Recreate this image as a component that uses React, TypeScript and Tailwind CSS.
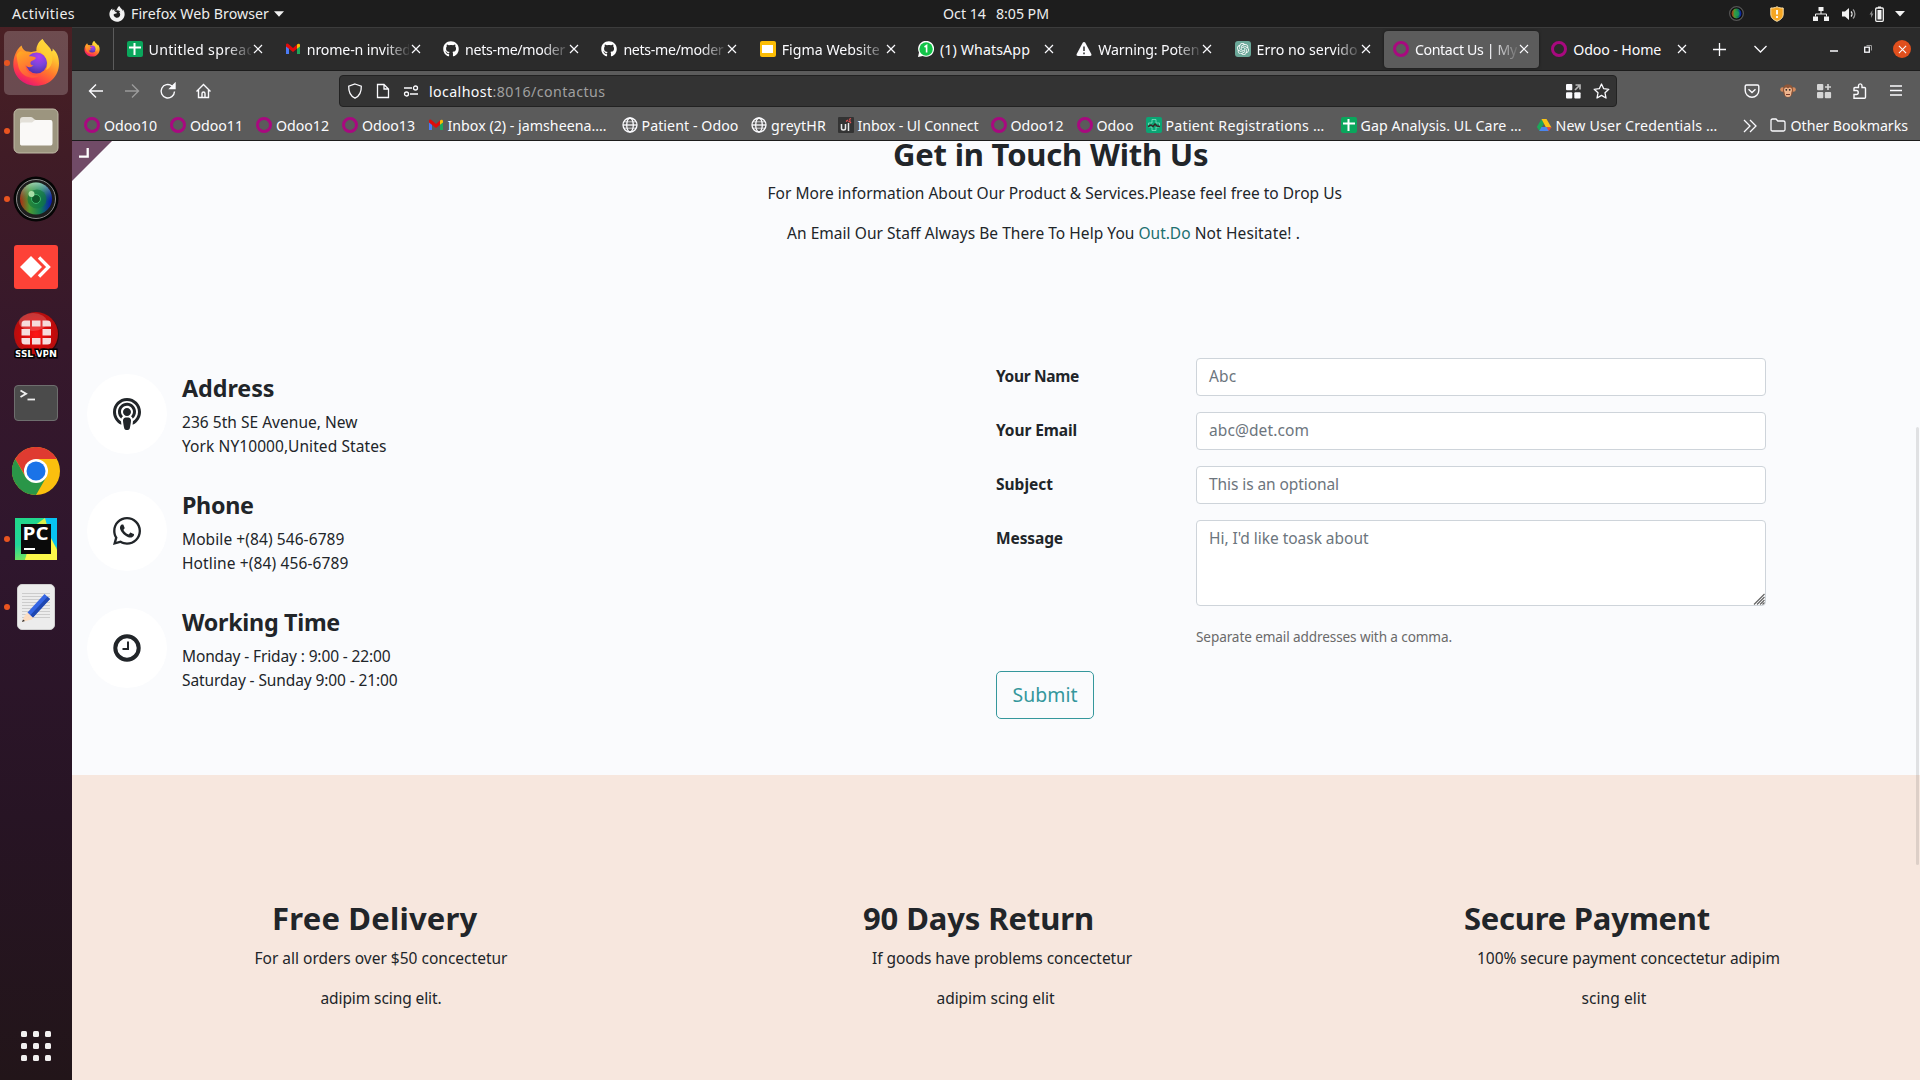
import React, { useLayoutEffect, useRef, useState } from "react";
import { FaGithub, FaWhatsapp, FaPodcast, FaFirefoxBrowser } from "react-icons/fa";
import { SiOpenai } from "react-icons/si";

/* Single line of text whose tracking is computed so that it fills the given width. */
function Fit({ w, children, className = "" }: { w: number; children: string; className?: string }) {
  const ref = useRef<HTMLSpanElement>(null);
  const [spacing, setSpacing] = useState(0);
  useLayoutEffect(() => {
    const el = ref.current;
    if (!el) return;
    el.style.letterSpacing = "0px";
    setSpacing((w - el.getBoundingClientRect().width) / children.length);
  }, [w, children]);
  return (
    <span ref={ref} className={"inline-block whitespace-pre " + className} style={{ letterSpacing: `${spacing}px` }}>
      {children}
    </span>
  );
}

function FirefoxLogo({ size, id }: { size: number; id: string }) {
  return (
    <svg width={size} height={size} viewBox="0 0 48 48">
      <defs>
        <linearGradient id={id + "a"} x1="0.8" y1="0" x2="0.25" y2="1">
          <stop offset="0" stopColor="#fff44f" />
          <stop offset="0.3" stopColor="#ffc02f" />
          <stop offset="0.55" stopColor="#ff7b2c" />
          <stop offset="0.8" stopColor="#ff3a49" />
          <stop offset="1" stopColor="#e0127c" />
        </linearGradient>
        <radialGradient id={id + "b"} cx="0.6" cy="0.2" r="0.85">
          <stop offset="0" stopColor="#b13bf0" />
          <stop offset="0.5" stopColor="#7a45d8" />
          <stop offset="1" stopColor="#4b2fa5" />
        </radialGradient>
        <linearGradient id={id + "c"} x1="0" y1="0" x2="0.4" y2="1">
          <stop offset="0" stopColor="#ffae22" />
          <stop offset="1" stopColor="#ff5a3a" />
        </linearGradient>
      </defs>
      <path
        fill={`url(#${id}a)`}
        d="M9.5 6.5C4 11 1.3 18 1.3 25.5 1.3 37.5 11.5 46.8 24.3 46.8S47 37.5 47 24.5C47 17 44.2 12.5 40.5 9.5 41 11.5 40.5 12.5 39.5 12.5 38.5 8 33 5 30.5 0 26 3 24 8 24.5 12L17 13.5C13 12.5 10.3 10 9.500 6.500Z"
      />
      <circle cx="24.500" cy="24" r="10.500" fill={`url(#${id}b)`} />
      <path
        fill={`url(#${id}c)`}
        d="M4.500 16C7 11.500 9 11.500 12 13.500 15 12 17 12.500 19 13 17.500 15 17 16 17.500 17.500 20 17 23 18 24 19 22.500 21.500 19 21.500 18.500 23.500 18 25.500 20 26.500 21.500 26 18.500 29.500 15 28.500 13.500 25.500 13 32 19.500 37.500 27 36.500 22 41.500 9 38 6.500 28 5.500 24 5 20 4.500 16Z"
      />
      <path fill="#ffd035" opacity="0.75" d="M30.500 0C26 4 25.500 9 29 13 34 18 37.500 23 34 31 39.500 29 42 21 39.500 12.500 38.500 8 33 5 30.500 0Z" />
    </svg>
  );
}

const Sheet = () => (
  <div className="flex h-4 w-4 items-center justify-center rounded-[2px] bg-[#0aa75c]">
    <svg width="12" height="12" viewBox="0 0 12 12" stroke="#fff" strokeWidth="2">
      <path d="M0 4.500H12M5.500 0V12" />
    </svg>
  </div>
);
const Gmail = () => (
  <svg width="16" height="16" viewBox="0 0 16 16">
    <path fill="#4b7bf5" d="M1 4v9h3V6z" />
    <path fill="#1ea75a" d="M12 6v7h3V4z" />
    <path fill="#fbbc04" d="M12 3.500v4.200l3-2.200V4c0-1.300-1.600-2-3-.5z" />
    <path fill="#e00b0b" d="M1 4c0-1.500 1.600-2 3-.5L8 7l4-3.500v4.200L8 11 1 5.500z" />
  </svg>
);
const Slides = () => (
  <div className="flex h-4 w-4 items-center justify-center rounded-[2px] bg-[#fbbc04]">
    <div className="h-[8px] w-[11px] bg-white" />
  </div>
);
const Wa = () => (
  <svg width="16" height="16" viewBox="0 0 16 16">
    <path fill="#fff" d="M0 16 1 11.500A8 8 0 1 1 4.600 15z" />
    <circle cx="8.100" cy="8" r="6.700" fill="#12c448" />
    <path d="M6.500 6 8.600 4.600V11.500" stroke="#fff" strokeWidth="1.600" fill="none" />
  </svg>
);
const Warn = () => (
  <svg width="16" height="16" viewBox="0 0 16 16">
    <path fill="#fbfbfe" d="M8 1c.6 0 1 .3 1.300.8l6 11.200c.5 1-.1 2-1.300 2H2c-1.200 0-1.800-1-1.300-2l6-11.200C7 1.300 7.400 1 8 1z" />
    <path d="M8 5.500v4.500M8 11.500v1.700" stroke="#2b2b2b" strokeWidth="1.500" />
  </svg>
);
const Gpt = () => (
  <div className="flex h-4 w-4 items-center justify-center rounded-[3px] bg-[#6ba899] text-[12px] text-white">
    <SiOpenai />
  </div>
);
const Ring = () => <div className="h-4 w-4 rounded-full border-[3.5px] border-[#a8097f]" />;
const Globe = () => (
  <svg width="16" height="16" viewBox="0 0 16 16" fill="none" stroke="#fbfbfe" strokeWidth="1.300">
    <circle cx="8" cy="8" r="7" />
    <ellipse cx="8" cy="8" rx="3.300" ry="7" />
    <path d="M1 8H15" />
    <path d="M2 4.800H14M2 11.200H14" strokeWidth="0.700" />
  </svg>
);
const Ul = () => (
  <div className="relative h-4 w-4 rounded-[1px] bg-[#333]">
    <svg width="16" height="16" viewBox="0 0 16 16" fill="none">
      <path d="M3.500 7v4.500c0 2 4 2 4 0V7M10.500 6v8" stroke="#e8e8e8" strokeWidth="1.500" />
      <path d="M8 4.500 10 3M11 2.500l2-1M10.500 5 12.500 3.500M12 6l1-1" stroke="#e05252" strokeWidth="1.300" />
    </svg>
  </div>
);
const Patient = () => (
  <svg width="16" height="16" viewBox="0 0 16 16">
    <rect width="16" height="16" rx="2" fill="#0aa574" />
    <path d="M6 2.500h4V6h3.500v4H10v3.500H6V10H2.500V6H6z" fill="none" stroke="#7fe0bf" strokeWidth="0.800" />
    <path d="M2 9.500 5 8l2 1.500L9 7l2 2 3 .5" fill="none" stroke="#3a2222" strokeWidth="1.400" />
  </svg>
);
const Drive = () => (
  <svg width="16" height="16" viewBox="0 0 16 16">
    <path fill="#1ea75a" d="M5.500 2 8 6.500 3.500 14 .8 10z" />
    <path fill="#fbc316" d="M5.500 2h5L15.500 10.500H10z" />
    <path fill="#4a86f0" d="M3.200 14 5.500 10h7L12.800 14z" />
    <path fill="#e8453c" d="M12.800 14 10.500 10.300h5z" />
  </svg>
);
const Folder = () => (
  <svg width="16" height="16" viewBox="0 0 16 16" fill="none" stroke="#fbfbfe" strokeWidth="1.300">
    <path d="M1 3.500C1 2.500 1.500 2 2.500 2H6l1.800 2h5.700c1 0 1.500.5 1.500 1.500v7c0 1-.5 1.500-1.500 1.500h-11C1.500 14 1 13.500 1 12.500z" />
  </svg>
);

const tabs: { icon: React.ReactNode; title: string; w: number; active?: boolean }[] = [
  { icon: <Sheet />, title: "Untitled spread", w: 107 },
  { icon: <Gmail />, title: "nrome-n invited", w: 104 },
  { icon: <FaGithub size={16} color="#fff" />, title: "nets-me/moder", w: 100 },
  { icon: <FaGithub size={16} color="#fff" />, title: "nets-me/moder", w: 100 },
  { icon: <Slides />, title: "Figma Website", w: 98 },
  { icon: <Wa />, title: "(1) WhatsApp", w: 90 },
  { icon: <Warn />, title: "Warning: Poten", w: 101 },
  { icon: <Gpt />, title: "Erro no servido", w: 101 },
  { icon: <Ring />, title: "Contact Us | My", w: 102, active: true },
  { icon: <Ring />, title: "Odoo - Home", w: 88 },
];

const bookmarks: { icon: React.ReactNode; title: string; w: number; item: string }[] = [
  { icon: <Ring />, title: "Odoo10", w: 53, item: "w-[86px]" },
  { icon: <Ring />, title: "Odoo11", w: 53, item: "w-[86px]" },
  { icon: <Ring />, title: "Odoo12", w: 53, item: "w-[86px]" },
  { icon: <Ring />, title: "Odoo13", w: 53, item: "w-[85.500px]" },
  { icon: <Gmail />, title: "Inbox (2) - jamsheena.…", w: 159, item: "w-[194px]" },
  { icon: <Globe />, title: "Patient - Odoo", w: 97, item: "w-[129.500px]" },
  { icon: <Globe />, title: "greytHR", w: 55, item: "w-[86.500px]" },
  { icon: <Ul />, title: "Inbox - Ul Connect", w: 121, item: "w-[153px]" },
  { icon: <Ring />, title: "Odoo12", w: 53, item: "w-[86px]" },
  { icon: <Ring />, title: "Odoo", w: 37, item: "w-[69px]" },
  { icon: <Patient />, title: "Patient Registrations …", w: 159, item: "w-[195px]" },
  { icon: <Sheet />, title: "Gap Analysis. UL Care …", w: 161, item: "w-[195px]" },
  { icon: <Drive />, title: "New User Credentials …", w: 162, item: "w-[198px]" },
];

function TopBar() {
  return (
    <div className="flex h-[27px] shrink-0 items-center bg-[#1d1d1d] text-[14.200px] leading-[26px] text-[#eeeeee]">
      <div className="w-[109px] pl-3">
        <Fit w={63}>Activities</Fit>
      </div>
      <FaFirefoxBrowser size={16} color="#f2f2f2" />
      <div className="ml-[6px] w-[139px]">
        <Fit w={138}>Firefox Web Browser</Fit>
      </div>
      <svg className="ml-1" width="10" height="6" viewBox="0 0 11 6">
        <path fill="#f2f2f2" d="M0 0H11L5.500 6z" />
      </svg>
      <div className="ml-[659px] flex gap-[10px]">
        <Fit w={43}>Oct 14</Fit>
        <Fit w={53}>8:05 PM</Fit>
      </div>
      <div className="ml-auto flex items-center pr-[15px]">
        <svg className="mr-[26px]" width="15" height="15" viewBox="0 0 46 46">
          <circle cx="23" cy="23" r="21" fill="#0c0c0c" stroke="#555" strokeWidth="4" />
          <circle cx="23" cy="23" r="15" fill="url(#lens)" />
          <circle cx="24" cy="23" r="8" fill="#1fa055" opacity="0.700" />
        </svg>
        <svg className="mr-[29px]" width="14" height="16" viewBox="0 0 14 16">
          <path d="M7 .7C5 2 3 2 .8 2v6c0 4 3 6 6.200 7.300C10.200 14 13.200 12 13.200 8V2C11 2 9 2 7 .7z" fill="#f5a623" stroke="#fde3ad" strokeWidth="1" />
          <path d="M7 4v4.500M7 10v2" stroke="#fff" strokeWidth="1.800" />
        </svg>
        <svg className="mr-[13px]" width="16" height="14" viewBox="0 0 16 14" fill="#f2f2f2">
          <path d="M5.500 0h5v4h-5zM0 9.500h5V14H0zM11 9.500h5V14h-5z" />
          <path d="M8 4v3M2.500 9.500V7h11v2.500" fill="none" stroke="#f2f2f2" />
        </svg>
        <svg className="mr-[12px]" width="15" height="14" viewBox="0 0 15 14">
          <path d="M0 4.500h3L7 1v12L3 9.500H0z" fill="#f2f2f2" />
          <path d="M9 4.500c1.300 1.300 1.300 3.700 0 5" fill="none" stroke="#f2f2f2" strokeWidth="1.300" />
          <path d="M11 2.500c2.500 2.500 2.500 6.500 0 9" fill="none" stroke="#999" strokeWidth="1.300" />
        </svg>
        <svg className="mr-[11px]" width="15" height="16" viewBox="0 0 15 16">
          <path d="M3.500 4 .5 8.500H2V12L4.500 7.500H3z" fill="#888" />
          <rect x="6.700" y="2" width="7.600" height="13.300" rx="1" fill="none" stroke="#f2f2f2" strokeWidth="1.300" />
          <path d="M9 .5h3V2H9zM8.500 4h4v9.500h-4z" fill="#f2f2f2" />
        </svg>
        <svg width="10" height="6" viewBox="0 0 10 6">
          <path fill="#f2f2f2" d="M0 0H10L5 5.500z" />
        </svg>
      </div>
    </div>
  );
}

function DockItem({ children, running, active }: { children: React.ReactNode; running?: boolean; active?: boolean }) {
  return (
    <div className="relative flex h-[68px] w-full shrink-0 items-center justify-center">
      {active && <div className="absolute inset-x-1 inset-y-[2px] rounded-[5px] bg-white/20" />}
      {running && <div className="absolute left-[4px] top-[31px] h-[6px] w-[6px] rounded-full bg-[#e95420]" />}
      <div className="relative">{children}</div>
    </div>
  );
}

function Dock() {
  const cells = [0, 1, 2];
  return (
    <div className="flex w-[72px] shrink-0 flex-col bg-[linear-gradient(180deg,#4a2024_0%,#401c26_12%,#36182b_30%,#2f162d_50%,#271424_75%,#221519_100%)] pt-[2px]">
      <DockItem running active>
        <FirefoxLogo size={48} id="ffl" />
      </DockItem>
      <DockItem running>
        <svg width="46" height="46" viewBox="0 0 46 46">
          <rect x="1" y="1" width="44" height="44" rx="5" fill="#9c957f" stroke="#c0baa7" />
          <path d="M7 12c0-2 1-3 3-3h8c2 0 3 3 5 3h14c2 0 2 1 2 3v20c0 1.500-.5 2-2 2H9c-1.500 0-2-.5-2-2z" fill="#e3e0d8" />
          <path d="M7 17c0-2 1-2.500 3-2.500h9l3-2.500h15c2 0 2.500 1 2.500 3v20c0 2-.8 2.500-2.500 2.500H9.500C7.700 37.500 7 37 7 35z" fill="#faf9f7" />
        </svg>
      </DockItem>
      <DockItem running>
        <svg width="46" height="46" viewBox="0 0 46 46">
          <defs>
            <linearGradient id="lens" x1="0" x2="1">
              <stop offset="0" stopColor="#b12a12" />
              <stop offset="0.300" stopColor="#4c9a32" />
              <stop offset="0.650" stopColor="#0f7a5a" />
              <stop offset="1" stopColor="#0b12b5" />
            </linearGradient>
            <linearGradient id="lens2" x1="0" x2="0" y1="0" y2="1">
              <stop offset="0" stopColor="#c8ece0" stopOpacity="0.700" />
              <stop offset="0.600" stopColor="#1d8a50" stopOpacity="0" />
            </linearGradient>
          </defs>
          <circle cx="23" cy="23" r="22.500" fill="#050505" />
          <circle cx="23" cy="23" r="19.500" fill="#1d1d1d" stroke="#8d8d8d" strokeWidth="1" />
          <circle cx="23" cy="22.500" r="16" fill="url(#lens)" />
          <circle cx="23" cy="22.500" r="16" fill="url(#lens2)" />
          <circle cx="24" cy="23" r="9.500" fill="#127a3e" opacity="0.650" />
          <circle cx="23" cy="23" r="4.500" fill="#0e5a2a" stroke="#3db86c" />
          <circle cx="18.500" cy="18" r="3" fill="#c9f5c0" opacity="0.800" />
        </svg>
      </DockItem>
      <DockItem>
        <div className="flex h-11 w-11 items-center justify-center rounded-[3px] bg-[#fd4237]">
          <svg width="32" height="22" viewBox="0 0 32 22">
            <path d="M11 0 22 11 11 22 0 11z" fill="#fff" />
            <path d="M19 1.500 28.500 11 19 20.500" fill="none" stroke="#fff" strokeWidth="3.300" />
          </svg>
        </div>
      </DockItem>
      <DockItem>
        <svg width="46" height="48" viewBox="0 0 46 48">
          <defs>
            <radialGradient id="vpn" cx="0.500" cy="0.500" r="0.550">
              <stop offset="0" stopColor="#ff1616" />
              <stop offset="0.600" stopColor="#d00808" />
              <stop offset="1" stopColor="#a11" />
            </radialGradient>
          </defs>
          <circle cx="24" cy="24" r="22" fill="#2a0c12" />
          <circle cx="23" cy="23" r="22" fill="url(#vpn)" />
          <ellipse cx="20" cy="11" rx="14" ry="9" fill="#fff" opacity="0.180" />
          <path
            fill="#f6dcdc"
            d="M12 9.500h5v6H8.500v-2C8.500 11 9.500 9.500 12 9.500zM19 9.500h8.500v6H19zM29.500 9.500h5c2.500 0 3.500 1.500 3.500 4v2h-8.500zM8.500 18h8.500v6.500H8.500zM29.500 18H38v6.500h-8.500zM8.500 27h8.500v6.500h-5c-2.500 0-3.500-1-3.500-3.500zM19 27h8.500v6.500H19zM29.500 27H38v3c0 2.500-1 3.500-3.500 3.500h-5z"
          />
          <text
            x="23"
            y="46"
            textAnchor="middle"
            textLength="42"
            className="font-['DejaVu_Sans'] text-[9.500px] font-bold"
            fill="#fff"
            stroke="#000"
            strokeWidth="3"
            paintOrder="stroke"
          >
            SSL VPN
          </text>
        </svg>
      </DockItem>
      <DockItem>
        <svg width="44" height="36" viewBox="0 0 44 36">
          <rect x="0.500" y="0.500" width="43" height="35" rx="3.500" fill="#4b4b4b" stroke="#6e6e6e" />
          <path d="M6.500 5.500 12 8.700 6.500 12" fill="none" stroke="#eee" strokeWidth="1.900" />
          <path d="M13.500 14.500H21" stroke="#eee" strokeWidth="1.800" />
        </svg>
      </DockItem>
      <DockItem>
        <svg width="48" height="48" viewBox="0 0 48 48">
          <circle cx="24" cy="24" r="24" fill="#fbbf0e" />
          <path d="M24 12H44.800A24 24 0 0 0 3.200 12L14 30z" fill="#df3b31" />
          <path d="M3.200 12 13.600 30 24 36 34.400 30 24 48A24 24 0 0 1 3.200 12z" fill="#2a9648" />
          <circle cx="24" cy="24" r="12" fill="#fff" />
          <circle cx="24" cy="24" r="9.500" fill="#1a73e8" />
        </svg>
      </DockItem>
      <DockItem running>
        <svg width="42" height="42" viewBox="0 0 42 42">
          <defs>
            <linearGradient id="pyc" x1="0" x2="0.300" y1="0" y2="1">
              <stop offset="0" stopColor="#21d789" />
              <stop offset="0.600" stopColor="#22d59a" />
              <stop offset="1" stopColor="#7be85a" />
            </linearGradient>
          </defs>
          <rect width="42" height="42" fill="url(#pyc)" />
          <path d="M29 0H42V30L36 22z" fill="#07c3f2" />
          <path d="M19 8 30 0 36 22 42 33V42H10L12 34z" fill="#d9f04a" />
          <path d="M12 36 36 20 42 32V42H10z" fill="#fcf84a" />
          <rect x="6" y="6" width="30" height="30" fill="#0a0a0a" />
          <text x="7.500" y="22" textLength="26" lengthAdjust="spacingAndGlyphs" className="font-['Open_Sans'] text-[18px] font-bold" fill="#fff">
            PC
          </text>
          <rect x="9" y="30" width="11" height="2" fill="#fff" />
        </svg>
      </DockItem>
      <DockItem running>
        <svg width="38" height="46" viewBox="0 0 38 46">
          <rect x="0.500" y="0.500" width="37" height="45" rx="4.500" fill="#ececec" stroke="#cfcfcf" />
          <path d="M5 9.500H33M5 12.500H33M5 15.500H33M5 18.500H33M5 21.500H33M5 24.500H33M5 27.500H33M5 30.500H33M5 33.500H33" stroke="#c4c4c4" strokeWidth="0.800" />
          <path d="M5 38 8 31 14.500 35.500z" fill="#fbdcc0" />
          <path d="M5 38 6 35.500 8 37z" fill="#333" />
          <path d="M8 31 11 28 17 33.500 14 36z" fill="#fbdcc0" />
          <path d="M10.500 28.500 27.500 10 33 15 16 33.500z" fill="#3465e3" />
          <path d="M13.500 31 30.500 12.700 33 15 16 33.500z" fill="#1f47b0" />
        </svg>
      </DockItem>
      <div className="mb-[19px] ml-[21px] mt-auto flex flex-col gap-[6px]">
        {cells.map((r) => (
          <div key={r} className="flex gap-[6px]">
            {cells.map((c) => (
              <div key={c} className="h-[6px] w-[6px] rounded-[1.500px] bg-[#f2f0f0]" />
            ))}
          </div>
        ))}
      </div>
    </div>
  );
}

const Cross = ({ size = 10 }: { size?: number }) => (
  <svg width={size} height={size} viewBox="0 0 10 10" stroke="#fbfbfe" strokeWidth="1.200">
    <path d="M1 1 9 9M9 1 1 9" />
  </svg>
);

function TabBar() {
  return (
    <div className="flex h-[43px] items-center border-t border-[#3c3c3c] bg-[#2b2b2b]">
      <div className="flex h-full w-[42px] items-center border-r border-[#5c5c5c] pl-3">
        <FirefoxLogo size={16} id="ffs" />
      </div>
      <div className="ml-[2px] flex h-[37px]">
        {tabs.map((t, i) => (
          <div key={i} className="h-full w-[158.300px] px-[2px]">
            <div className={"flex h-full items-center rounded-[4px] pl-[8.500px] text-[14.200px] text-[#fbfbfe] " + (t.active ? "bg-[#5c5c5c] shadow-[0_0_3px_rgba(0,0,0,0.500)]" : "")}>
              <div className="w-[22px] shrink-0">{t.icon}</div>
              <div className={"w-[102px] shrink-0 overflow-hidden pt-px " + (t.w > 93 ? "[mask-image:linear-gradient(90deg,#000_76%,transparent_103%)]" : "")}>
                <Fit w={t.w}>{t.title}</Fit>
              </div>
              <div className="ml-[2px]">
                <Cross />
              </div>
            </div>
          </div>
        ))}
      </div>
      <div className="ml-auto flex items-center pr-[9px]">
        <svg className="mr-[28px]" width="13" height="13" viewBox="0 0 13 13" stroke="#fbfbfe" strokeWidth="1.300">
          <path d="M0 6.500H13M6.500 0V13" />
        </svg>
        <svg className="mr-[63px]" width="13" height="8" viewBox="0 0 13 8" stroke="#fbfbfe" strokeWidth="1.300" fill="none">
          <path d="M.5 1 6.500 7 12.500 1" />
        </svg>
        <svg className="mr-[26px] mt-1" width="8" height="2" viewBox="0 0 8 2">
          <path d="M0 1H8" stroke="#fbfbfe" strokeWidth="1.500" />
        </svg>
        <svg className="mr-[21px]" width="8" height="8" viewBox="0 0 8 8" fill="none">
          <path d="M2.500.5H7.500V5.500" stroke="#9a9a9a" />
          <rect x="0.700" y="2.200" width="4.600" height="5" stroke="#fbfbfe" strokeWidth="1.300" />
        </svg>
        <div className="flex h-[18px] w-[18px] items-center justify-center rounded-full bg-[#e04f1d]">
          <Cross size={9} />
        </div>
      </div>
    </div>
  );
}

function NavBar() {
  return (
    <div className="flex h-[41px] items-center border-t border-[#1c1c1c] bg-[#5b5b5b] pl-4 text-[#fbfbfe]">
      <svg width="123" height="18" viewBox="0 0 123 18" fill="none" stroke="#fbfbfe" strokeWidth="1.400">
        <path d="M15 9H1.500M8 2.500 1.500 9 8 15.500" />
        <path d="M37 9H50.500M44 2.500 50.500 9 44 15.500" stroke="#9b9b9b" />
        <path d="M86.500 9.500A6.700 6.700 0 1 1 84 4" />
        <path d="M82 6.500H87V1.500z" fill="#fbfbfe" />
        <path d="M108.500 9.500 115.500 2.500 122.500 9.500M110.500 8V15.500H120.500V8M114 15.500V11.500C114 9.500 117 9.500 117 11.500V15.500" />
      </svg>
      <div className="ml-[128px] flex h-8 w-[1278px] items-center rounded-[4px] border border-[#222] bg-[#333] pl-[7px] text-[14.200px]">
        <svg width="16" height="16" viewBox="0 0 16 16" fill="none" stroke="#fbfbfe" strokeWidth="1.300">
          <path d="M8 1 14.300 3.200C14.500 9 12.500 13 8 15.200 3.500 13 1.500 9 1.700 3.200z" />
        </svg>
        <svg className="ml-[13px]" width="14" height="16" viewBox="0 0 14 16" fill="none" stroke="#fbfbfe" strokeWidth="1.300">
          <path d="M1.500 1.500H8L12.500 6V14.500H1.500zM8 1.500V6H12.500" />
        </svg>
        <svg className="ml-[13px]" width="16" height="12" viewBox="0 0 16 12" fill="none" stroke="#fbfbfe" strokeWidth="1.300">
          <path d="M1 3H9M7 9H15" />
          <circle cx="12.500" cy="3" r="2" />
          <circle cx="3.500" cy="9" r="2" />
        </svg>
        <div className="ml-[10px] whitespace-nowrap pt-px">
          <Fit w={63.500}>localhost</Fit>
          <Fit w={113} className="text-[#a0a0a0]">:8016/contactus</Fit>
        </div>
        <svg className="ml-auto" width="15" height="15" viewBox="0 0 15 15" fill="#fbfbfe">
          <rect width="6.300" height="6.300" rx="1" />
          <rect y="8.300" width="6.300" height="6.300" rx="1" />
          <rect x="8.300" y="8.300" width="6.300" height="6.300" rx="1" />
          <path d="M9 6 13.500 1.500M9.500 1H14V5.500" fill="none" stroke="#b5b5b5" strokeWidth="1.700" />
        </svg>
        <svg className="ml-[12px] mr-[6.500px]" width="17" height="16" viewBox="0 0 17 16" fill="none" stroke="#fbfbfe" strokeWidth="1.300" strokeLinejoin="round">
          <path d="M8.500 1 10.700 5.700 15.800 6.300 12 9.800 13 15 8.500 12.400 4 15 5 9.800 1.200 6.300 6.300 5.700z" />
        </svg>
      </div>
      <div className="ml-auto mr-4 flex items-center gap-5">
        <svg width="16" height="16" viewBox="0 0 16 16" fill="none" stroke="#fbfbfe" strokeWidth="1.400">
          <path d="M2.500 2H13.500C14.300 2 14.800 2.500 14.800 3.300V7.500A6.800 6.800 0 0 1 1.200 7.500V3.300C1.200 2.500 1.700 2 2.500 2z" />
          <path d="M4.500 6.200 8 9.500 11.500 6.200" />
        </svg>
        <svg width="16" height="16" viewBox="0 0 16 16">
          <circle cx="2.500" cy="6.500" r="2.300" fill="#d58a5c" />
          <circle cx="13.500" cy="6.500" r="2.300" fill="#d58a5c" />
          <path d="M8 1.500c4 0 5 2.500 5 6s-2 7-5 7-5-3.500-5-7 1-6 5-6z" fill="#8f5638" />
          <path d="M8 5.500C6 3.500 4 5 4 7c0 1.500.8 2 .8 3.500C4.800 13 6 14 8 14s3.200-1 3.200-3.500C11.200 9 12 8.500 12 7c0-2-2-3.500-4-1.500z" fill="#efb58e" />
          <circle cx="6.300" cy="6.800" r="0.900" fill="#222" />
          <circle cx="9.700" cy="6.800" r="0.900" fill="#222" />
          <path d="M6 11.500h4" stroke="#7a3b2a" />
        </svg>
        <svg width="16" height="16" viewBox="0 0 16 16" fill="#d6d6d6">
          <rect x="1" y="1" width="6.300" height="6.300" rx="1" />
          <rect x="1" y="9" width="6.300" height="6.300" rx="1" />
          <rect x="8.800" y="9" width="6.300" height="6.300" rx="1" />
          <path d="M12 1v6M9 4h6" stroke="#d6d6d6" strokeWidth="1.600" />
        </svg>
        <svg width="16" height="16" viewBox="0 0 16 16" fill="none" stroke="#fbfbfe" strokeWidth="1.400">
          <path d="M2 15.200V11.500H4.500C6.800 11.500 6.800 7.500 4.500 7.500H2V5.500C2 4.800 2.300 4.500 3 4.500H6.500V2.700C6.500.3 10 .3 10 2.700V4.500H12.500C13.200 4.500 13.500 4.800 13.500 5.500V14.200C13.500 15 13.200 15.200 12.500 15.200z" />
        </svg>
        <svg width="16" height="16" viewBox="0 0 16 16" stroke="#fbfbfe" strokeWidth="1.300">
          <path d="M2 3H14M2 7.500H14M2 12H14" />
        </svg>
      </div>
    </div>
  );
}

function BookmarkBar() {
  return (
    <div className="flex h-[30px] items-center border-b border-[#1c1c1c] bg-[#5b5b5b] pl-3 text-[14.200px] text-[#fbfbfe]">
      {bookmarks.map((b, i) => (
        <div key={i} className={"flex shrink-0 items-center gap-[4px] whitespace-nowrap " + b.item}>
          {b.icon}
          <Fit w={b.w}>{b.title}</Fit>
        </div>
      ))}
      <svg className="ml-[9px]" width="14" height="14" viewBox="0 0 14 14" fill="none" stroke="#fbfbfe" strokeWidth="1.300">
        <path d="M1 1 7 7 1 13M7 1 13 7 7 13" />
      </svg>
      <div className="ml-auto flex shrink-0 items-center gap-[4.500px] pr-3">
        <Folder />
        <Fit w={117.500}>Other Bookmarks</Fit>
      </div>
    </div>
  );
}

const contacts = [
  { icon: <FaPodcast size={32} />, title: "Address", tw: 92.500, lines: [["236 5th SE Avenue, New", 175.500], ["York NY10000,United States", 204.500]] },
  { icon: <FaWhatsapp size={32} />, title: "Phone", tw: 71.500, lines: [["Mobile +(84) 546-6789", 162.500], ["Hotline +(84) 456-6789", 166.500]] },
  {
    icon: (
      <svg width="28" height="28" viewBox="0 0 28 28" fill="none" stroke="#212529">
        <circle cx="14" cy="14" r="11.700" strokeWidth="4" />
        <path d="M15 7.500V15H9.500" strokeWidth="2" />
      </svg>
    ),
    title: "Working Time",
    tw: 158,
    lines: [["Monday - Friday : 9:00 - 22:00", 208.500], ["Saturday - Sunday 9:00 - 21:00", 215.500]],
  },
] as { icon: React.ReactNode; title: string; tw: number; lines: [string, number][] }[];

const fields = [
  { label: "Your Name", lw: 83, ph: "Abc", pw: 27.500 },
  { label: "Your Email", lw: 81, ph: "abc@det.com", pw: 100 },
  { label: "Subject", lw: 57, ph: "This is an optional", pw: 130 },
];

function Features() {
  const heading = "mb-px text-[31px] font-bold leading-[38px]";
  return (
    <div className="grid flex-1 grid-cols-3 bg-[#f7e7de] pt-[124px] leading-[40px]">
      <div>
        <h2 className={heading + " ml-[200px]"}><Fit w={205.500}>Free Delivery</Fit></h2>
        <div className="ml-[182.500px] flex w-[253px] flex-col items-center">
          <Fit w={253}>For all orders over $50 concectetur</Fit>
          <Fit w={121}>adipim scing elit.</Fit>
        </div>
      </div>
      <div>
        <h2 className={heading + " ml-[175px]"}><Fit w={231}>90 Days Return</Fit></h2>
        <div className="ml-[184px] flex w-[260px] flex-col items-center">
          <Fit w={260}>If goods have problems concectetur</Fit>
          <Fit w={118} className="mr-[13px]">adipim scing elit</Fit>
        </div>
      </div>
      <div>
        <h2 className={heading + " ml-[160px]"}><Fit w={246}>Secure Payment</Fit></h2>
        <div className="ml-[173px] flex w-[303px] flex-col items-center">
          <Fit w={303}>100% secure payment concectetur adipim</Fit>
          <Fit w={65} className="mr-[29px]">scing elit</Fit>
        </div>
      </div>
    </div>
  );
}

function Page() {
  const input = "flex h-[38px] w-[570px] rounded-[4px] border border-[#ced4da] bg-white px-3 pt-[5px] leading-[24px] text-[#6c757d]";
  return (
    <div className="relative flex flex-1 flex-col overflow-hidden bg-[#fafbfd] text-[15.500px] text-[#212529]">
      <div className="h-[634px] shrink-0">
        <div className="flex h-[217px] flex-col leading-[40px]">
          <h1 className="-mt-[6px] ml-[821px] h-[38px] shrink-0 text-[31px] font-bold leading-[38px]">
            <Fit w={315.500}>Get in Touch With Us</Fit>
          </h1>
          <div className="ml-[695.500px]"><Fit w={574.500}>For More information About Our Product & Services.Please feel free to Drop Us</Fit></div>
          <div className="ml-[715px] whitespace-pre">
            <Fit w={351.500}>An Email Our Staff Always Be There To Help You </Fit>
            <Fit w={52} className="text-[#20706f]">Out.Do</Fit>
            <Fit w={109.500}> Not Hesitate! .</Fit>
          </div>
        </div>
        <div className="flex">
          <div className="w-[924px] pl-[15px] pt-4">
            {contacts.map((c) => (
              <div key={c.title} className="flex h-[117px] items-start">
                <div className="flex h-20 w-20 items-center justify-center rounded-full bg-white">{c.icon}</div>
                <div className="ml-[15px] leading-[24px]">
                  <h3 className="mb-[7px] text-[23.300px] font-bold leading-[29px]"><Fit w={c.tw}>{c.title}</Fit></h3>
                  {c.lines.map(([t, w]) => (
                    <div key={t} className="h-6"><Fit w={w}>{t}</Fit></div>
                  ))}
                </div>
              </div>
            ))}
          </div>
          <div>
            {fields.map((f) => (
              <div key={f.label} className="mb-4 flex">
                <div className="w-[200px] pt-[6px] font-bold leading-[24px]"><Fit w={f.lw}>{f.label}</Fit></div>
                <div className={input}><Fit w={f.pw}>{f.ph}</Fit></div>
              </div>
            ))}
            <div className="flex">
              <div className="w-[200px] pt-[6px] font-bold leading-[24px]"><Fit w={67}>Message</Fit></div>
              <div>
                <div className={input + " relative !h-[86px]"}>
                  <Fit w={159.500} className="h-6">Hi, I'd like toask about</Fit>
                  <svg className="absolute bottom-0 right-0" width="12" height="12" viewBox="0 0 12 12" stroke="#666" strokeWidth="1.200">
                    <path d="M1 11.500 11.500 1M4 11.500 11.500 4M7 11.500 11.500 7M9.500 11.500 11.500 9.500" />
                  </svg>
                </div>
                <div className="mt-[20px] text-[13.600px] leading-[21px] text-[#6a6a6a]"><Fit w={256}>Separate email addresses with a comma.</Fit></div>
              </div>
            </div>
            <div className="mt-[24px] flex h-12 w-[98px] items-center justify-center rounded-[5px] border border-[#35979c] text-[19.400px] leading-[30px] text-[#35979c]">
              <Fit w={65}>Submit</Fit>
            </div>
          </div>
        </div>
      </div>
      <Features />
      <svg className="absolute left-0 top-0" width="40" height="40" viewBox="0 0 40 40">
        <path d="M0 0H40L0 40z" fill="#714b67" />
        <path d="M7 15.700H15.700V7" fill="none" stroke="#fff" strokeWidth="2.300" />
      </svg>
      <div className="absolute right-[1px] top-[286px] h-[438px] w-[3px] rounded-full bg-black/10" />
    </div>
  );
}

export default function App() {
  return (
    <div className="flex h-[1080px] w-[1920px] flex-col overflow-hidden font-['Noto_Sans',sans-serif]">
      <TopBar />
      <div className="flex min-h-0 flex-1">
        <Dock />
        <div className="flex min-w-0 flex-1 flex-col">
          <TabBar />
          <NavBar />
          <BookmarkBar />
          <Page />
        </div>
      </div>
    </div>
  );
}
